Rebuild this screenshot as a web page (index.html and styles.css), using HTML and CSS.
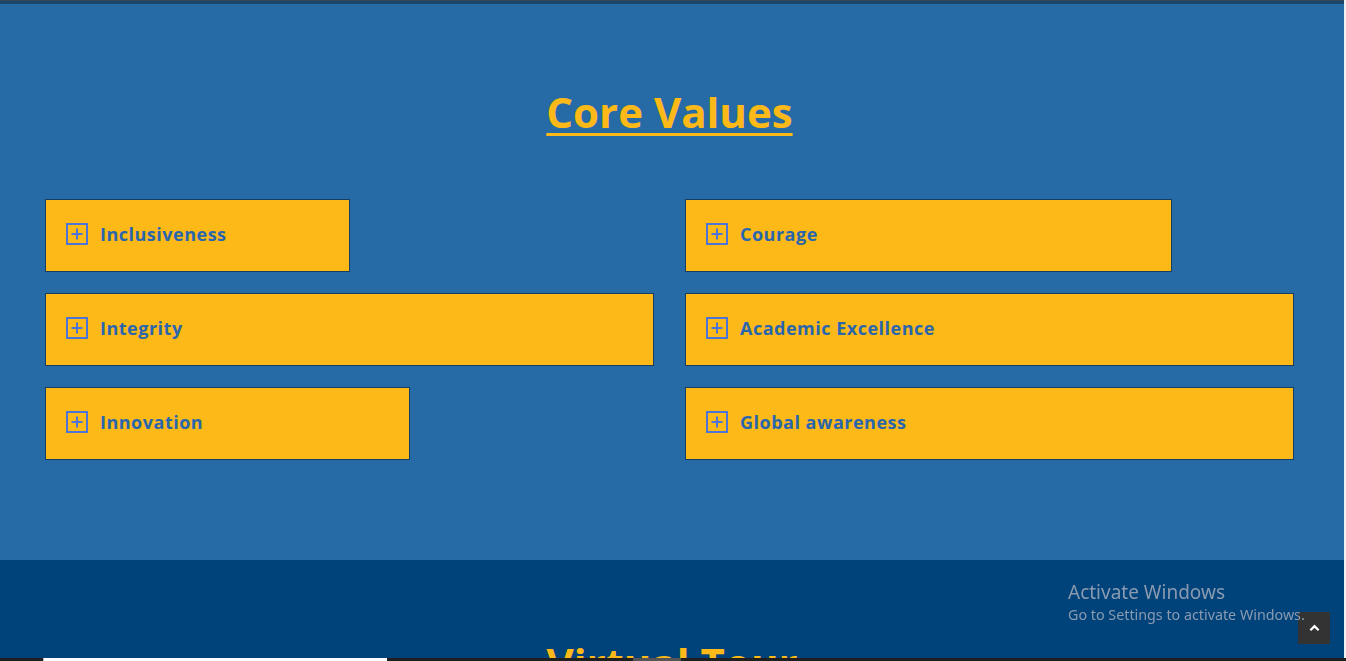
FILE: index.html
```html
<!DOCTYPE html>
<html lang="en">
<head>
<meta charset="utf-8">
<title>Core Values</title>
<link rel="stylesheet" href="styles.css">
</head>
<body>
<div class="page">
  <div class="topbar"></div>
  <section class="values">
    <h2 class="title">Core Values</h2>
    <div class="grid">
      <div class="col">
        <div class="item w50"><svg class="ico" viewBox="0 0 22 22"><rect x="1" y="1" width="20" height="20"/><path d="M11 5.5v11M5.5 11h11"/></svg><span>Inclusiveness</span></div>
        <div class="item w100"><svg class="ico" viewBox="0 0 22 22"><rect x="1" y="1" width="20" height="20"/><path d="M11 5.5v11M5.5 11h11"/></svg><span>Integrity</span></div>
        <div class="item w60"><svg class="ico" viewBox="0 0 22 22"><rect x="1" y="1" width="20" height="20"/><path d="M11 5.5v11M5.5 11h11"/></svg><span>Innovation</span></div>
      </div>
      <div class="col">
        <div class="item w80"><svg class="ico" viewBox="0 0 22 22"><rect x="1" y="1" width="20" height="20"/><path d="M11 5.5v11M5.5 11h11"/></svg><span>Courage</span></div>
        <div class="item w100"><svg class="ico" viewBox="0 0 22 22"><rect x="1" y="1" width="20" height="20"/><path d="M11 5.5v11M5.5 11h11"/></svg><span>Academic Excellence</span></div>
        <div class="item w100"><svg class="ico" viewBox="0 0 22 22"><rect x="1" y="1" width="20" height="20"/><path d="M11 5.5v11M5.5 11h11"/></svg><span>Global awareness</span></div>
      </div>
    </div>
  </section>
  <section class="tour">
    <h2 class="title plain">Virtual Tour</h2>
  </section>
</div>
<a class="totop" href="#"><svg viewBox="0 0 12 8"><path d="M1.5 6.5L6 2l4.5 4.5"/></svg></a>
<div class="watermark">
  <div class="wm-1">Activate Windows</div>
  <div class="wm-2">Go to Settings to activate Windows.</div>
</div>
<div class="bottombar"><span class="bb-white"></span><span class="bb-grey"></span></div>
</body>
</html>
```
FILE: styles.css
```css
html, body {
  margin: 0;
  padding: 0;
}
body {
  background: #f1f1f1;
  font-family: "Open Sans", "Liberation Sans", sans-serif;
  overflow: hidden;
  height: 661px;
}
.page {
  width: 1344px;
}
.topbar {
  height: 4px;
  background: #19466f;
  border-top: 1px solid #3b4450;
  box-sizing: border-box;
}
.values {
  background: #266aa6;
  height: 556px;
  box-sizing: border-box;
  padding: 83px 50px 0 45px;
}
.title {
  margin: 0;
  text-align: center;
  color: #fdb918;
  font-size: 42px;
  line-height: 50px;
  font-weight: 700;
  text-decoration: underline;
  text-decoration-thickness: 3px;
  text-underline-offset: 5px;
}
.title.plain {
  text-decoration: none;
}
.grid {
  margin-top: 62px;
  display: grid;
  grid-template-columns: 1fr 1fr;
  column-gap: 31px;
}
.col {
  display: flex;
  flex-direction: column;
  gap: 21.5px;
}
.item {
  height: 72.5px;
  box-sizing: border-box;
  background: #fdb918;
  border: 1px solid #163d63;
  padding: 0 20px;
  display: flex;
  align-items: center;
  gap: 12px;
  color: #2a66ad;
  font-weight: 700;
  font-size: 18px;
  letter-spacing: 0.5px;
  padding-bottom: 2px;
}
.w50 { width: 50%; }
.w60 { width: 60%; }
.w80 { width: 80%; }
.w100 { width: 100%; }
.ico {
  width: 22px;
  height: 22px;
  flex: none;
  fill: none;
  stroke: #4f74d8;
  stroke-width: 2;
}
.tour {
  background: #00427a;
  height: 101px;
  box-sizing: border-box;
  padding-top: 78px;
  overflow: hidden;
}
.watermark {
  position: fixed;
  left: 1068px;
  top: 580px;
  color: #8a9bb1;
  font-family: "Noto Sans", "Open Sans", sans-serif;
  z-index: 2;
}
.wm-1 {
  font-size: 19px;
  line-height: 24px;
}
.wm-2 {
  font-size: 14.3px;
  line-height: 21px;
}
.totop {
  position: fixed;
  left: 1298px;
  top: 612px;
  width: 32px;
  height: 32px;
  background: #333333;
  display: flex;
  align-items: center;
  justify-content: center;
  z-index: 1;
}
.totop svg {
  width: 11px;
  height: 8px;
  fill: none;
  stroke: #ffffff;
  stroke-width: 2.4;
}
.bottombar {
  position: fixed;
  left: 0;
  top: 658px;
  width: 1346px;
  height: 3px;
  background: #1f1f1f;
  z-index: 3;
}
.bb-white {
  position: absolute;
  left: 43px;
  top: 0;
  width: 344px;
  height: 3px;
  background: #ffffff;
  border-left: 1px solid #bbb;
  box-sizing: border-box;
}
.bb-grey {
  position: absolute;
  left: 633px;
  top: 0;
  width: 48px;
  height: 3px;
  background: #555555;
}
```
